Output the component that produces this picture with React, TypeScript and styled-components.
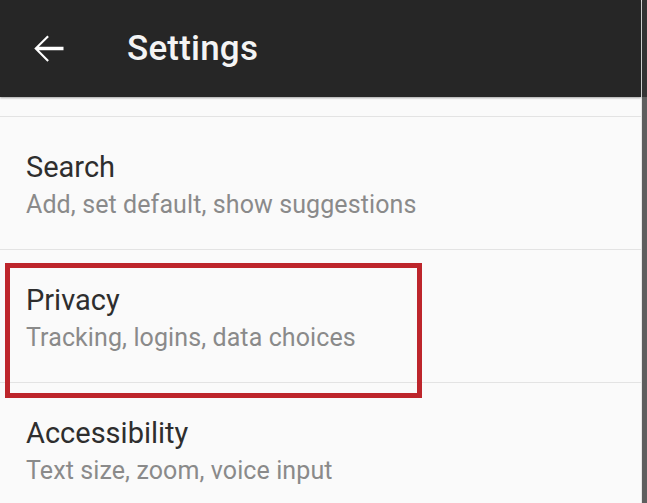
import React from "react";
import styled, { createGlobalStyle } from "styled-components";

const Global = createGlobalStyle`
  html, body { margin: 0; padding: 0; background: #fafafa; }
  body { font-family: Roboto, "Noto Sans", "Liberation Sans", sans-serif; }
  * { box-sizing: border-box; }
`;

const Frame = styled.div`
  display: flex;
  height: 503px;
  width: 647px;
  overflow: hidden;
`;

const Main = styled.div`
  flex: 1;
  display: flex;
  flex-direction: column;
  background: #fafafa;
  border-right: 1px solid #e6e6e6;
`;

const Edge = styled.div`
  width: 5px;
  background: linear-gradient(to bottom, #333333 0, #333333 97px, #5e5e5e 97px, #5e5e5e 100%);
`;

const Header = styled.header`
  height: 97px;
  flex: none;
  background: #262626;
  display: flex;
  align-items: center;
  padding-left: 26px;
  gap: 56px;
  box-shadow: 0 1px 2px rgba(0, 0, 0, 0.35);
  position: relative;
  z-index: 1;
`;

const BackButton = styled.div`
  width: 45px;
  height: 45px;
  display: flex;
  align-items: center;
  justify-content: center;
  color: #ffffff;
`;

const Title = styled.h1`
  margin: 0;
  color: #f4f4f4;
  font-size: 35px;
  font-weight: 500;
  letter-spacing: 0.2px;
  line-height: 40px;
`;

const List = styled.div`
  padding-top: 19px;
  display: flex;
  flex-direction: column;
`;

const Row = styled.div<{ $h: number }>`
  position: relative;
  height: ${(p) => p.$h}px;
  flex: none;
  border-top: 1px solid #e3e3e3;
  padding: 33px 0 0 26px;
  display: flex;
  flex-direction: column;
  gap: 6px;
`;

const RowTitle = styled.div`
  font-size: 29px;
  line-height: 34px;
  color: #2e2e2e;
`;

const RowSub = styled.div`
  font-size: 25px;
  line-height: 30px;
  color: #8a8a8a;
  letter-spacing: 0.1px;
`;

const Highlight = styled.div`
  position: absolute;
  left: 5px;
  top: 13px;
  width: 417px;
  height: 135px;
  border: 5px solid #bd252b;
  pointer-events: none;
  z-index: 2;
`;

const ArrowBack = () => (
  <svg width="45" height="45" viewBox="0 0 24 24" fill="currentColor">
    <path d="M20 11.1H6.9l5.3-5.3L11.4 5 4.4 12l7 7 .8-.8-5.3-5.3H20z" />
  </svg>
);

type Item = { title: string; sub: string; highlighted?: boolean };

const items: Item[] = [
  { title: "Search", sub: "Add, set default, show suggestions" },
  { title: "Privacy", sub: "Tracking, logins, data choices", highlighted: true },
  { title: "Accessibility", sub: "Text size, zoom, voice input" },
];

export default function App() {
  return (
    <>
      <Global />
      <Frame>
        <Main>
          <Header>
            <BackButton>
              <ArrowBack />
            </BackButton>
            <Title>Settings</Title>
          </Header>
          <List>
            {items.map((it) => (
              <Row key={it.title} $h={133}>
                <RowTitle>{it.title}</RowTitle>
                <RowSub>{it.sub}</RowSub>
                {it.highlighted && <Highlight />}
              </Row>
            ))}
          </List>
        </Main>
        <Edge />
      </Frame>
    </>
  );
}
